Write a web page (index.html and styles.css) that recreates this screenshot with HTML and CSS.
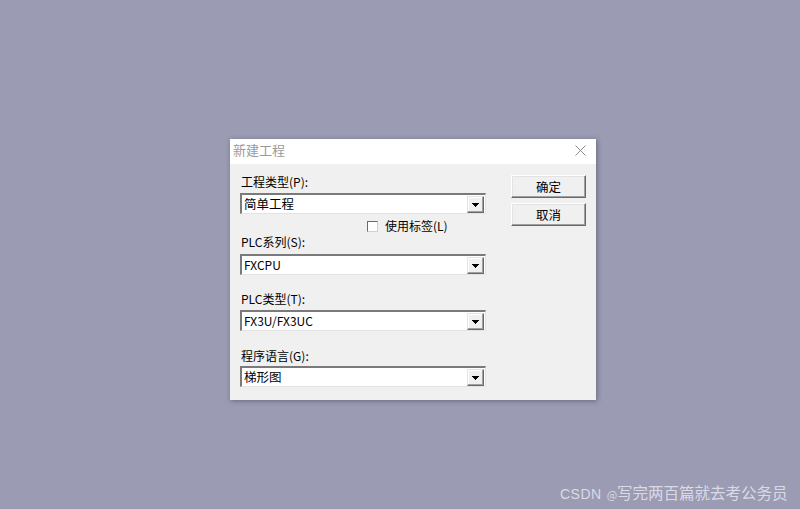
FILE: index.html
```html
<!DOCTYPE html>
<html lang="zh">
<head>
<meta charset="utf-8">
<title>新建工程</title>
<link rel="stylesheet" href="styles.css">
</head>
<body>
<div class="desktop">
  <div class="dialog">
    <div class="titlebar">
      <span class="title">新建工程</span>
      <svg class="close" width="11" height="11" viewBox="0 0 11 11"><path d="M0.5 0.5 L10.5 10.5 M10.5 0.5 L0.5 10.5" stroke="#8a8a8a" stroke-width="1" fill="none"/></svg>
    </div>
    <div class="body">
      <div class="form">
        <div class="label l1">工程类型(P):</div>
        <div class="combo c1"><span class="combo-text">简单工程</span><span class="combo-btn"><svg width="7" height="4" viewBox="0 0 7 4" shape-rendering="crispEdges"><rect x="0" y="0" width="7" height="1"/><rect x="1" y="1" width="5" height="1"/><rect x="2" y="2" width="3" height="1"/><rect x="3" y="3" width="1" height="1"/></svg></span></div>
        <div class="check-row"><span class="checkbox"></span><span class="check-label">使用标签(L)</span></div>
        <div class="label l2">PLC系列(S):</div>
        <div class="combo c2"><span class="combo-text">FXCPU</span><span class="combo-btn"><svg width="7" height="4" viewBox="0 0 7 4" shape-rendering="crispEdges"><rect x="0" y="0" width="7" height="1"/><rect x="1" y="1" width="5" height="1"/><rect x="2" y="2" width="3" height="1"/><rect x="3" y="3" width="1" height="1"/></svg></span></div>
        <div class="label l3">PLC类型(T):</div>
        <div class="combo c3"><span class="combo-text">FX3U/FX3UC</span><span class="combo-btn"><svg width="7" height="4" viewBox="0 0 7 4" shape-rendering="crispEdges"><rect x="0" y="0" width="7" height="1"/><rect x="1" y="1" width="5" height="1"/><rect x="2" y="2" width="3" height="1"/><rect x="3" y="3" width="1" height="1"/></svg></span></div>
        <div class="label l4">程序语言(G):</div>
        <div class="combo c4"><span class="combo-text">梯形图</span><span class="combo-btn"><svg width="7" height="4" viewBox="0 0 7 4" shape-rendering="crispEdges"><rect x="0" y="0" width="7" height="1"/><rect x="1" y="1" width="5" height="1"/><rect x="2" y="2" width="3" height="1"/><rect x="3" y="3" width="1" height="1"/></svg></span></div>
      </div>
      <div class="buttons">
        <button class="btn">确定</button>
        <button class="btn">取消</button>
      </div>
    </div>
  </div>
  <div class="watermark"><span class="wm-brand">CSDN</span><span class="wm-at">@</span><span class="wm-name">写完两百篇就去考公务员</span></div>
</div>
</body>
</html>
```

FILE: styles.css
```css
html, body {
  margin: 0;
  padding: 0;
}
body {
  background: #9b9bb3;
  font-family: "Noto Sans CJK SC", sans-serif;
  font-size: 12px;
  color: #000;
}
.desktop {
  position: relative;
  width: 800px;
  height: 509px;
  overflow: hidden;
}
.dialog {
  position: absolute;
  left: 230px;
  top: 139px;
  width: 366px;
  height: 261px;
  background: #f0f0f0;
  box-shadow: 1px 1px 5px rgba(40, 40, 60, 0.45);
  display: flex;
  flex-direction: column;
}
.titlebar {
  box-sizing: border-box;
  height: 25px;
  background: #fff;
  display: flex;
  align-items: flex-start;
  justify-content: space-between;
  padding: 0 10px 0 3px;
}
.title {
  color: #9a9a9a;
  font-size: 13px;
  line-height: 16px;
  margin-top: 3px;
}
.close {
  display: block;
  margin-top: 6px;
}
.body {
  display: flex;
  padding-left: 10px;
}
.form {
  width: 246px;
  display: flex;
  flex-direction: column;
}
.label {
  height: 16px;
  line-height: 16px;
  padding-left: 1px;
  white-space: nowrap;
}
.l1 { margin-top: 10px; }
.l2 { margin-top: 0; }
.l3 { margin-top: 16px; }
.l4 { margin-top: 17px; }
.combo {
  box-sizing: border-box;
  height: 21px;
  background: #fff;
  border-style: solid;
  border-width: 2px 1px 1px 2px;
  border-color: #7a7a7a #e3e3e3 #e3e3e3 #7a7a7a;
  display: flex;
  align-items: center;
  justify-content: space-between;
  padding-right: 1px;
}
.c1 { margin-top: 3px; }
.c2 { margin-top: 4px; }
.c3 { margin-top: 3px; }
.c4 { margin-top: 2px; }
.combo-text {
  padding-left: 2px;
  line-height: 16px;
  white-space: nowrap;
}
.c1 .combo-text, .c4 .combo-text {
  font-size: 12.5px;
}
.combo-btn {
  box-sizing: border-box;
  width: 17px;
  height: 17px;
  background: #f0f0f0;
  border-style: solid;
  border-width: 1px;
  border-color: #e3e3e3 #696969 #696969 #e3e3e3;
  box-shadow: inset -1px -1px #a0a0a0, inset 1px 1px #fff;
  display: flex;
  align-items: center;
  justify-content: center;
}
.combo-btn svg {
  display: block;
  fill: #000;
  margin-top: 1px;
}
.check-row {
  margin-top: 4px;
  height: 16px;
  display: flex;
  align-items: center;
  padding-left: 127px;
}
.checkbox {
  box-sizing: border-box;
  width: 11px;
  height: 11px;
  background: #fff;
  border: 1px solid #6a6a6a;
  border-right-color: #cfcfcf;
  border-bottom-color: #cfcfcf;
  margin-right: 7px;
}
.check-label {
  line-height: 16px;
  white-space: nowrap;
}
.buttons {
  margin-left: 25px;
  margin-top: 11px;
  display: flex;
  flex-direction: column;
  gap: 5px;
}
.btn {
  box-sizing: border-box;
  width: 75px;
  height: 23px;
  margin: 0;
  padding: 0;
  background: #f0f0f0;
  border-style: solid;
  border-width: 1px;
  border-color: #fff #696969 #696969 #fff;
  box-shadow: inset -1px -1px #a0a0a0, inset 1px 1px #e3e3e3;
  font-family: "Noto Sans CJK SC", sans-serif;
  font-size: 12.5px;
  line-height: 16px;
  color: #000;
}
.watermark {
  position: absolute;
  left: 560px;
  top: 481px;
  display: flex;
  align-items: baseline;
  font-family: "Noto Sans CJK SC", sans-serif;
  font-size: 14px;
  line-height: 22px;
  color: rgba(240, 240, 248, 0.75);
  white-space: nowrap;
}
.wm-brand {
  font-family: "Liberation Sans", sans-serif;
  letter-spacing: 0.5px;
}
.wm-at {
  margin-left: 5px;
  font-size: 11px;
}
.wm-name {
  font-size: 15.5px;
}
```
